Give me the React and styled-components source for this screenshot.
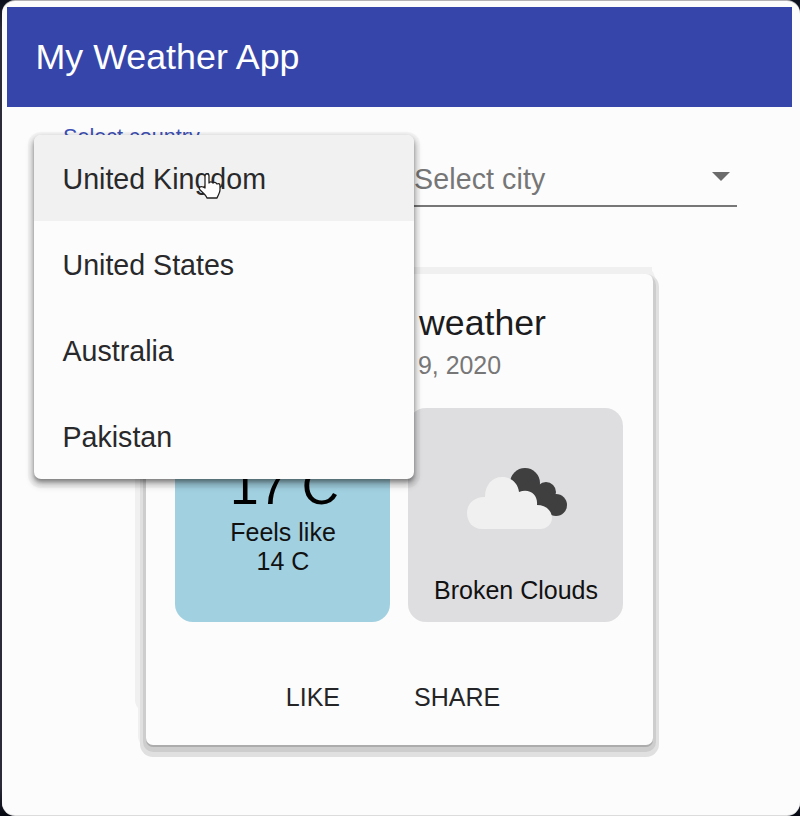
import React from "react";
import styled, { createGlobalStyle } from "styled-components";

const Global = createGlobalStyle`
  * { box-sizing: border-box; }
  body {
    margin: 0;
    background: linear-gradient(#0b0f1e, #2c2b3a 30px, #2c2b3a 786px, #060912);
    font-family: "Liberation Sans", Arial, sans-serif;
    overflow: hidden;
  }
`;

const Window = styled.main`
  position: relative;
  width: 798px;
  height: 814px;
  margin: 1px 0 1px 2px;
  padding: 6px 8px 0 5px;
  border-radius: 13px;
  background: #fcfcfc;
  box-shadow: 0 -1px 0 #b3b1b3, 0 1px 0 #dcdcdc;
`;

const AppBar = styled.header`
  display: flex;
  align-items: center;
  height: 100px;
  padding: 1px 0 0 28.5px;
  background: #3645aa;
  color: #fff;
`;

const AppTitle = styled.h1`
  margin: 0;
  font-size: 35.8px;
  font-weight: 400;
  line-height: 1;
`;

const Filters = styled.section`
  display: grid;
  grid-template-columns: 323px 323px;
  column-gap: 28px;
  height: 100px;
  margin-left: 56px;
`;

const Field = styled.div`
  display: flex;
  flex-direction: column;
  justify-content: space-between;
  border-bottom: 2px solid #777;
`;

const FieldLabel = styled.label`
  padding-top: 17px;
  font-size: 21.6px;
  line-height: 26px;
  color: #3f51b5;
`;

const FieldValue = styled.div`
  display: flex;
  align-items: center;
  justify-content: space-between;
  height: 34px;
  margin-top: auto;
  margin-bottom: 9px;
  padding-right: 7px;
  font-size: 28.6px;
  letter-spacing: 0.1px;
  color: #767676;
`;

const Caret = styled.span`
  border: 9px solid transparent;
  border-top-color: #6b6b6b;
  border-bottom: 0;
  margin-top: -5px;
`;

const WeatherCard = styled.article`
  display: flex;
  flex-direction: column;
  width: 507px;
  height: 471px;
  margin: 67px 0 0 139px;
  padding: 29px 29px 0;
  border-radius: 7px;
  background: #fcfcfc;
  box-shadow:
    0 2px 0 #acacac,
    0 4px 0 3px #cdcdcd,
    0 6px 0 6px #e0e0e0,
    -3px -2px 0 5px #f0f0f0,
    -6px -38px 0 5px #f0f0f0;
  clip-path: inset(-7px -10px -20px -20px round 10px);
`;

const CardTitle = styled.h2`
  width: 371px;
  margin: 0;
  font-size: 35.7px;
  font-weight: 400;
  line-height: 41px;
  text-align: right;
  color: #1c1c1e;
`;

const CardDate = styled.p`
  width: 326px;
  margin: 5px 0 0;
  font-size: 24.9px;
  line-height: 32px;
  text-align: right;
  color: #777;
`;

const Tiles = styled.div`
  display: grid;
  grid-template-columns: 215px 215px;
  column-gap: 18px;
  margin-top: 27px;
`;

const Tile = styled.div`
  display: flex;
  flex-direction: column;
  align-items: center;
  height: 214px;
  border-radius: 18px;
  background: ${({ $tone }) => ($tone === "cold" ? "#a1d0e0" : "#dedee0")};
  color: #111;
  font-size: 25px;
  line-height: 29px;
`;

const Temperature = styled.strong`
  margin: 47px 0 0 4px;
  font-size: 51.5px;
  font-weight: 400;
  line-height: 63px;
  color: #000;
`;

const FeelsLike = styled.span`
  padding-left: 1px;
`;

const CloudIcon = styled.svg`
  width: 104px;
  height: 68px;
  margin: 58px 0 0 5px;
`;

const Condition = styled.span`
  margin-top: 42px;
  padding-left: 1px;
`;

const Actions = styled.footer`
  display: flex;
  justify-content: center;
  gap: 74px;
  margin-top: 58px;
  padding-right: 13px;
`;

const Action = styled.button`
  padding: 0;
  border: 0;
  background: none;
  font-family: inherit;
  font-size: 25px;
  line-height: 34px;
  color: #252527;
`;

const Menu = styled.ul`
  position: absolute;
  top: 134px;
  left: 32px;
  width: 380px;
  height: 344px;
  margin: 0;
  padding: 0;
  list-style: none;
  border-radius: 7px;
  background: #fcfcfc;
  box-shadow:
    0 3px 4px rgba(0, 0, 0, 0.4),
    0 5px 6px 3px rgba(0, 0, 0, 0.12),
    0 3px 1px 6px rgba(0, 0, 0, 0.045);
`;

const MenuItem = styled.li`
  display: flex;
  align-items: center;
  height: 86px;
  padding: 2px 0 0 28.5px;
  border-radius: ${({ $active }) => ($active ? "7px 7px 0 0" : "0")};
  background: ${({ $active }) => ($active ? "#f1f1f1" : "transparent")};
  font-size: 28.6px;
  color: #29292b;
`;

const Pointer = styled.svg`
  position: absolute;
  top: 172px;
  left: 194px;
  width: 26px;
  height: 28px;
`;

const countries = ["United Kingdom", "United States", "Australia", "Pakistan"];

function BrokenClouds() {
  return (
    <CloudIcon viewBox="0 0 104 68">
      <g fill="#3f3f40">
        <circle cx="59" cy="17" r="15" />
        <circle cx="80" cy="26" r="10" />
        <circle cx="90" cy="39" r="11" />
        <path d="M48 25 67 13 80 24 92 35 86 49 70 42Z" />
      </g>
      <path
        fill="#f0f0f0"
        d="M16 63C7 63 1 56 1 47c0-9 7-16 17-16h1C19 19 26 11 36 11c9 0 16 6 17 15 11-4 19 3 18 13 8 0 15 5 15 13 0 6-5 11-12 11Z"
      />
    </CloudIcon>
  );
}

export default function App() {
  return (
    <>
      <Global />
      <Window>
        <AppBar>
          <AppTitle>My Weather App</AppTitle>
        </AppBar>
        <Filters>
          <Field>
            <FieldLabel>Select country</FieldLabel>
          </Field>
          <Field>
            <FieldValue>
              Select city
              <Caret />
            </FieldValue>
          </Field>
        </Filters>
        <WeatherCard>
          <CardTitle>weather</CardTitle>
          <CardDate>9, 2020</CardDate>
          <Tiles>
            <Tile $tone="cold">
              <Temperature>17 C</Temperature>
              <FeelsLike>Feels like</FeelsLike>
              <FeelsLike>14 C</FeelsLike>
            </Tile>
            <Tile $tone="cloud">
              <BrokenClouds />
              <Condition>Broken Clouds</Condition>
            </Tile>
          </Tiles>
          <Actions>
            <Action>LIKE</Action>
            <Action>SHARE</Action>
          </Actions>
        </WeatherCard>
        <Menu>
          {countries.map((name, i) => (
            <MenuItem key={name} $active={i === 0}>
              {name}
            </MenuItem>
          ))}
        </Menu>
        <Pointer viewBox="0 0 26 28">
          <path
            fill="#fff"
            stroke="#222"
            strokeWidth="1.3"
            strokeLinejoin="round"
            d="M9 15V3c0-3 4-3 4 0v7c1-2 3-1 4 0 1-1 3-1 4 1 2-1 3 0 3 2v4c0 3-2 5-3 8H11c-1-3-5-6-7-8-2-3 1-4 3-3Z"
          />
        </Pointer>
      </Window>
    </>
  );
}
